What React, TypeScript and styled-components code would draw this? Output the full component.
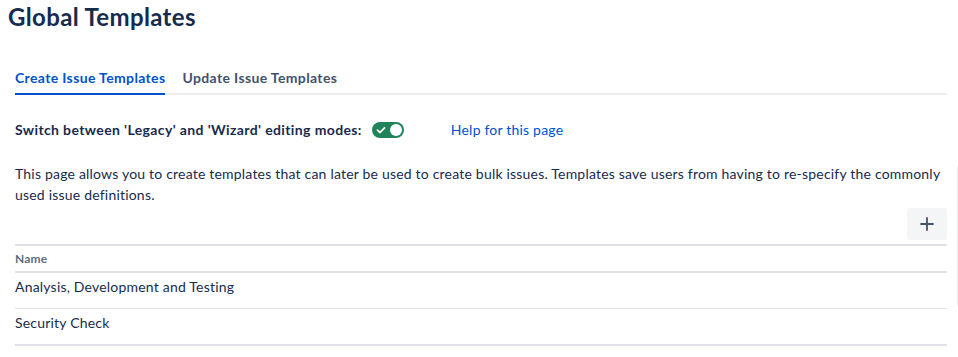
import React from "react";
import styled, { createGlobalStyle } from "styled-components";

const Global = createGlobalStyle`
  html, body { margin: 0; padding: 0; background: #ffffff; }
  body {
    font-family: "Lato", "Noto Sans", "Liberation Sans", sans-serif;
    color: #172b4d;
    letter-spacing: 0.2px;
    -webkit-font-smoothing: antialiased;
  }
`;

const Page = styled.div`
  width: 958px;
  height: 357px;
  overflow: hidden;
  box-sizing: border-box;
  position: relative;
`;

const Title = styled.h1`
  margin: 0;
  padding: 3px 0 0 8px;
  height: 37px;
  font-size: 24px;
  line-height: 28px;
  font-weight: 700;
  color: #172b4d;
  letter-spacing: 0.35px;
`;

const Content = styled.div`
  padding: 0 11px 0 15px;
`;

const TabList = styled.div`
  margin-top: 28px;
  display: flex;
  gap: 17px;
  border-bottom: 2px solid #ebecf0;
`;

const Tab = styled.div<{ $active?: boolean }>`
  font-size: 14px;
  line-height: 20px;
  font-weight: 700;
  letter-spacing: 0.36px;
  padding: 0 0 5px;
  margin-bottom: -2px;
  color: ${(p) => (p.$active ? "#0052cc" : "#42526e")};
  border-bottom: 2px solid ${(p) => (p.$active ? "#0052cc" : "transparent")};
`;

const ModeRow = styled.div`
  display: flex;
  align-items: center;
  height: 20px;
  margin-top: 25px;
`;

const ModeLabel = styled.span`
  font-size: 14px;
  font-weight: 700;
  line-height: 20px;
  letter-spacing: 0.38px;
`;

const Toggle = styled.span`
  margin-left: 10px;
  width: 32px;
  height: 16px;
  border-radius: 8px;
  background: #1f845a;
  display: inline-flex;
  align-items: center;
  justify-content: space-between;
  padding: 0 2px 0 4px;
  box-sizing: border-box;
`;

const Knob = styled.span`
  width: 12px;
  height: 12px;
  border-radius: 50%;
  background: #ffffff;
`;

const HelpLink = styled.a`
  margin-left: 47px;
  font-size: 14px;
  line-height: 20px;
  color: #0052cc;
  text-decoration: none;
`;

const Description = styled.p`
  margin: 23px 0 0;
  font-size: 14px;
  line-height: 21px;
  color: #172b4d;
`;

const Actions = styled.div`
  display: flex;
  justify-content: flex-end;
  margin-top: 3px;
`;

const IconButton = styled.button`
  width: 40px;
  height: 32px;
  border: none;
  border-radius: 3px;
  background: #f4f5f7;
  color: #42526e;
  display: flex;
  align-items: center;
  justify-content: center;
  padding: 0;
  cursor: pointer;
`;

const Table = styled.table`
  width: 100%;
  margin-top: 4px;
  border-collapse: collapse;
  border-top: 2px solid #dfe1e6;
  border-bottom: 2px solid #dfe1e6;
`;

const HeadCell = styled.th`
  text-align: left;
  font-size: 12px;
  font-weight: 700;
  color: #5e6c84;
  height: 25px;
  padding: 0;
  border-bottom: 2px solid #dfe1e6;
  line-height: 16px;
`;

const Row = styled.tr`
  & + & td {
    border-top: 1px solid #dfe1e6;
  }
`;

const Cell = styled.td`
  font-size: 14px;
  line-height: 20px;
  padding: 4px 0 11px;
  color: #172b4d;
`;

const EdgeLine = styled.div`
  position: absolute;
  right: 0;
  top: 166px;
  width: 1px;
  height: 140px;
  background: #ebecf0;
`;

const templates = ["Analysis, Development and Testing", "Security Check"];

export default function App() {
  return (
    <Page>
      <Global />
      <Title>Global Templates</Title>
      <Content>
        <TabList>
          <Tab $active>Create Issue Templates</Tab>
          <Tab>Update Issue Templates</Tab>
        </TabList>
        <ModeRow>
          <ModeLabel>Switch between 'Legacy' and 'Wizard' editing modes:</ModeLabel>
          <Toggle>
            <svg width="10" height="10" viewBox="0 0 10 10">
              <path d="M1.5 5.2 L4 7.5 L8.5 2.8" fill="none" stroke="#fff" strokeWidth="1.8" strokeLinecap="round" strokeLinejoin="round" />
            </svg>
            <Knob />
          </Toggle>
          <HelpLink href="#">Help for this page</HelpLink>
        </ModeRow>
        <Description>
          This page allows you to create templates that can later be used to create bulk issues. Templates save users from having to re-specify the commonly used issue definitions.
        </Description>
        <Actions>
          <IconButton aria-label="Add">
            <svg width="16" height="16" viewBox="0 0 16 16">
              <path d="M8 2v12M2 8h12" stroke="#42526e" strokeWidth="1.8" strokeLinecap="round" />
            </svg>
          </IconButton>
        </Actions>
        <Table>
          <thead>
            <tr>
              <HeadCell>Name</HeadCell>
            </tr>
          </thead>
          <tbody>
            {templates.map((t) => (
              <Row key={t}>
                <Cell>{t}</Cell>
              </Row>
            ))}
          </tbody>
        </Table>
      </Content>
      <EdgeLine />
    </Page>
  );
}
